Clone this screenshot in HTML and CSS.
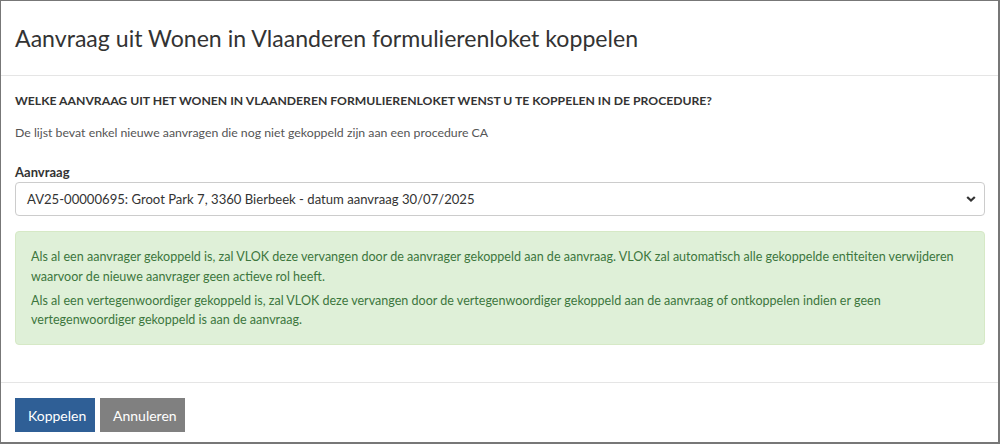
FILE: index.html
```html
<!DOCTYPE html>
<html lang="nl">
<head>
<meta charset="utf-8">
<title>Aanvraag koppelen</title>
<link rel="stylesheet" href="styles.css">
</head>
<body>
<div class="modal">
  <div class="modal-header">
    <h4 class="modal-title">Aanvraag uit Wonen in Vlaanderen formulierenloket koppelen</h4>
  </div>
  <div class="modal-body">
    <h5 class="question">WELKE AANVRAAG UIT HET WONEN IN VLAANDEREN FORMULIERENLOKET WENST U TE KOPPELEN IN DE PROCEDURE?</h5>
    <p class="intro">De lijst bevat enkel nieuwe aanvragen die nog niet gekoppeld zijn aan een procedure CA</p>
    <label class="field-label">Aanvraag</label>
    <div class="select">
      <span class="select-text">AV25-00000695: Groot Park 7, 3360 Bierbeek - datum aanvraag 30/07/2025</span>
      <svg class="chevron" width="10" height="8" viewBox="0 0 10 8"><path d="M1.2 2 L5 5.6 L8.8 2" fill="none" stroke="#333" stroke-width="2.2"/></svg>
    </div>
    <div class="alert">
      <p>Als al een aanvrager gekoppeld is, zal VLOK deze vervangen door de aanvrager gekoppeld aan de aanvraag. VLOK zal automatisch alle gekoppelde entiteiten verwijderen waarvoor de nieuwe aanvrager geen actieve rol heeft.</p>
      <p>Als al een vertegenwoordiger gekoppeld is, zal VLOK deze vervangen door de vertegenwoordiger gekoppeld aan de aanvraag of ontkoppelen indien er geen<br>vertegenwoordiger gekoppeld is aan de aanvraag.</p>
    </div>
  </div>
  <div class="modal-footer">
    <button class="btn btn-primary">Koppelen</button>
    <button class="btn btn-default">Annuleren</button>
  </div>
</div>
</body>
</html>
```
FILE: styles.css
```css
* { box-sizing: border-box; }
html, body { margin: 0; padding: 0; background: #fff; }
body {
  font-family: "Lato", "Noto Sans", sans-serif;
  color: #333;
  width: 1000px;
  height: 444px;
  overflow: hidden;
}
.modal {
  width: 1000px;
  height: 444px;
  border: 1px solid #777;
  border-right-width: 2px;
  border-bottom-width: 2px;
  display: flex;
  flex-direction: column;
}
.modal-header {
  height: 75px;
  border-bottom: 1px solid #e5e5e5;
  padding: 0 14px;
  display: flex;
  align-items: center;
}
.modal-title {
  margin: 0;
  font-size: 23.1px;
  font-weight: 400;
  line-height: 30px;
  color: #333;
}
.modal-body {
  flex: 1;
  padding: 15px 13px 15px 14px;
  display: flex;
  flex-direction: column;
}
.question {
  margin: 0 0 12px;
  font-size: 12.2px;
  font-weight: 700;
  line-height: 20px;
  color: #333;
}
.intro {
  margin: 0 0 21px;
  font-size: 12.3px;
  line-height: 20px;
  color: #555;
}
.field-label {
  display: block;
  font-size: 13px;
  font-weight: 700;
  line-height: 16px;
  margin-bottom: 2px;
  color: #333;
}
.select {
  height: 34px;
  border: 1px solid #ccc;
  border-radius: 4px;
  padding: 0 8px 0 11px;
  display: flex;
  align-items: center;
  justify-content: space-between;
  font-size: 13.1px;
  color: #333;
}
.alert {
  margin-top: 15px;
  background: #dff0d8;
  border: 1px solid #d6e9c6;
  border-radius: 4px;
  color: #3c763d;
  padding: 15px 14px 10px 15px;
  font-size: 12.55px;
  line-height: 19.5px;
}
.alert p { margin: 0 0 4.5px; }
.modal-footer {
  height: 60px;
  border-top: 1px solid #e5e5e5;
  padding: 15px 14px 0;
  display: flex;
  gap: 5px;
  align-items: flex-start;
}
.btn {
  height: 34px;
  border: 0;
  padding: 0 13px;
  font-family: inherit;
  font-size: 14px;
  color: #fff;
  cursor: pointer;
}
.btn-primary { background: #2f5f96; width: 80px; }
.btn-default { background: #808080; width: 85px; }
```
